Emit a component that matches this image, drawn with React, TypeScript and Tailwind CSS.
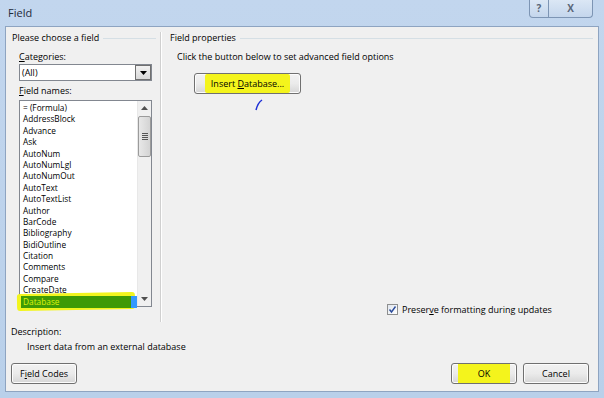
const items = [
  "= (Formula)",
  "AddressBlock",
  "Advance",
  "Ask",
  "AutoNum",
  "AutoNumLgl",
  "AutoNumOut",
  "AutoText",
  "AutoTextList",
  "Author",
  "BarCode",
  "Bibliography",
  "BidiOutline",
  "Citation",
  "Comments",
  "Compare",
  "CreateDate",
];

function GroupTitle({ title }: { title: string }) {
  return (
    <div className="flex items-center gap-1 h-[12px]">
      <span className="whitespace-nowrap">{title}</span>
      <div className="flex-1 h-0 border-t border-[#d5dfe5] mt-[1px]" />
    </div>
  );
}

function Button({ children, className = "" }: { children: React.ReactNode; className?: string }) {
  return (
    <div
      className={
        "h-[21px] rounded-[3px] border border-[#707070] bg-gradient-to-b from-[#f2f2f2] via-[#ebebeb] to-[#d6d6d6] flex items-center justify-center shadow-[inset_0_0_0_1px_#fcfcfc] " +
        className
      }
    >
      {children}
    </div>
  );
}

export default function App() {
  return (
    <div
      className="w-[604px] h-[398px] bg-gradient-to-b from-[#c2d6ee] to-[#b9d0ea] flex flex-col text-[9px] text-black overflow-hidden"
      style={{ fontFamily: '"Open Sans", "Noto Sans", sans-serif' }}
    >
      {/* title bar */}
      <div className="h-[26px] flex items-start justify-between pl-2 pr-[11px]">
        <span className="text-[11px] mt-[5px] text-[#1e2a3a]">Field</span>
        <div className="flex h-[18px] rounded-b-[4px] border border-t-0 border-[#7d95b4] bg-gradient-to-b from-[#dbe7f5] to-[#c4d6ec] overflow-hidden">
          <div className="w-[19px] flex items-center justify-center text-[10px] font-bold text-[#5a6678] border-r border-[#7d95b4]">?</div>
          <div className="w-[43px] flex items-center justify-center text-[10px] font-bold text-[#5a6678]">X</div>
        </div>
      </div>

      {/* client area */}
      <div className="flex-1 mx-[5px] mb-[6px] bg-[#f0f0f0] border border-[#8ea4c1] flex flex-col">
        <div className="flex h-[294px] pt-[5px]">
          {/* left column */}
          <div className="w-[154px] pl-[6px] pr-[4px] flex flex-col">
            <GroupTitle title="Please choose a field" />
            <div className="pl-[7px] mt-[6px]">
              <div className="h-[12px]">
                <span className="underline">C</span>ategories:
              </div>
              <div className="mt-[2px] h-[17px] w-[133px] bg-white border border-[#828790] flex items-center">
                <span className="pl-[2px] flex-1">(All)</span>
                <div className="w-[16px] h-[15px] border border-[#707070] bg-gradient-to-b from-[#f2f2f2] to-[#d9d9d9] flex items-center justify-center">
                  <svg width="7" height="4" viewBox="0 0 7 4">
                    <path d="M0 0h7L3.5 4z" fill="#000" />
                  </svg>
                </div>
              </div>
              <div className="h-[12px] mt-[3px]">
                <span className="underline">F</span>ield names:
              </div>
              <div className="mt-[4px] w-[133px] h-[207px] bg-white border border-[#828790] flex">
                <div className="flex-1 pt-[1px] pl-[1px] text-[8.3px] leading-[11.4px]">
                  {items.map((it) => (
                    <div key={it} className="h-[11.4px] leading-[11.4px] pl-[2px]">
                      {it}
                    </div>
                  ))}
                  <div className="relative h-[12px] flex">
                    <div className="absolute -left-[4px] -top-[3px] w-[118px] h-[17px] bg-[#f2f51e] rounded-[3px] -rotate-1" />
                    <div className="relative w-[110px] h-[12px] bg-[#3e9a06] text-[#dff30a] pl-[2px] leading-[12px]">Database</div>
                    <div className="relative w-[6px] h-[12px] bg-[#3399ff]" />
                  </div>
                </div>
                <div className="w-[16px] bg-[#f0f0f0] border-l border-[#e8e8e8] flex flex-col items-center">
                  <div className="h-[14px] flex items-center justify-center">
                    <svg width="7" height="4" viewBox="0 0 7 4">
                      <path d="M0 4h7L3.5 0z" fill="#505050" />
                    </svg>
                  </div>
                  <div className="mt-[1px] w-[13px] h-[41px] rounded-[2px] border border-[#9b9b9b] bg-gradient-to-r from-[#e8e8e8] to-[#d4d4d4] flex flex-col items-center justify-center gap-[1px]">
                    <div className="w-[6px] h-px bg-[#555]" />
                    <div className="w-[6px] h-px bg-[#555]" />
                    <div className="w-[6px] h-px bg-[#555]" />
                    <div className="w-[6px] h-px bg-[#555]" />
                  </div>
                  <div className="flex-1" />
                  <div className="h-[14px] flex items-center justify-center">
                    <svg width="7" height="4" viewBox="0 0 7 4">
                      <path d="M0 0h7L3.5 4z" fill="#505050" />
                    </svg>
                  </div>
                </div>
              </div>
            </div>
          </div>

          {/* separator */}
          <div className="w-[2px] border-l border-[#d0d0d0] border-r border-r-white h-[290px]" />

          {/* right column */}
          <div className="flex-1 pl-[8px] pr-[5px] flex flex-col">
            <GroupTitle title="Field properties" />
            <div className="pl-[7px] mt-[6px] h-[12px]">Click the button below to set advanced field options</div>
            <div className="pl-[24px] mt-[11px]">
              <Button className="w-[107px] h-[20px]">
                <span className="bg-[#f4f41c] px-[6px] py-[3px] rounded-[2px]">
                  Insert <span className="underline">D</span>atabase...
                </span>
              </Button>
            </div>
            <svg className="ml-[85px] mt-[5px]" width="8" height="12" viewBox="0 0 8 12">
              <path d="M1 11 C2 7 4 3 7 1" stroke="#1d2fd6" strokeWidth="1.5" fill="none" />
            </svg>
            <div className="flex-1" />
            <div className="flex items-center gap-[4px] pl-[217px] mb-[5px]">
              <div className="w-[11px] h-[11px] border border-[#8e8f8f] bg-gradient-to-br from-[#e0e6ee] to-white flex items-center justify-center">
                <svg width="9" height="9" viewBox="0 0 9 9">
                  <path d="M1.5 4.5 L3.5 7 L7.5 1.5" stroke="#2a4b9b" strokeWidth="1.4" fill="none" />
                </svg>
              </div>
              <span>
                Preser<span className="underline">v</span>e formatting during updates
              </span>
            </div>
          </div>
        </div>

        {/* description */}
        <div className="pl-[5px] mt-[4px]">
          <div className="h-[12px]">Description:</div>
          <div className="h-[12px] pl-[16px] mt-[3px]">Insert data from an external database</div>
        </div>

        <div className="flex-1" />

        {/* buttons */}
        <div className="flex items-center px-[5px] mb-[7px]">
          <Button className="w-[66px]">
            <span>
              F<span className="underline">i</span>eld Codes
            </span>
          </Button>
          <div className="flex-1" />
          <Button className="w-[66px] border-[#3c7fb1] shadow-[inset_0_0_0_1px_#8ad4f7]">
            <span className="bg-[#f4f41c] px-[20px] py-[3px]">OK</span>
          </Button>
          <Button className="w-[66px] ml-[6px] mr-[4px]">Cancel</Button>
        </div>
      </div>
    </div>
  );
}
